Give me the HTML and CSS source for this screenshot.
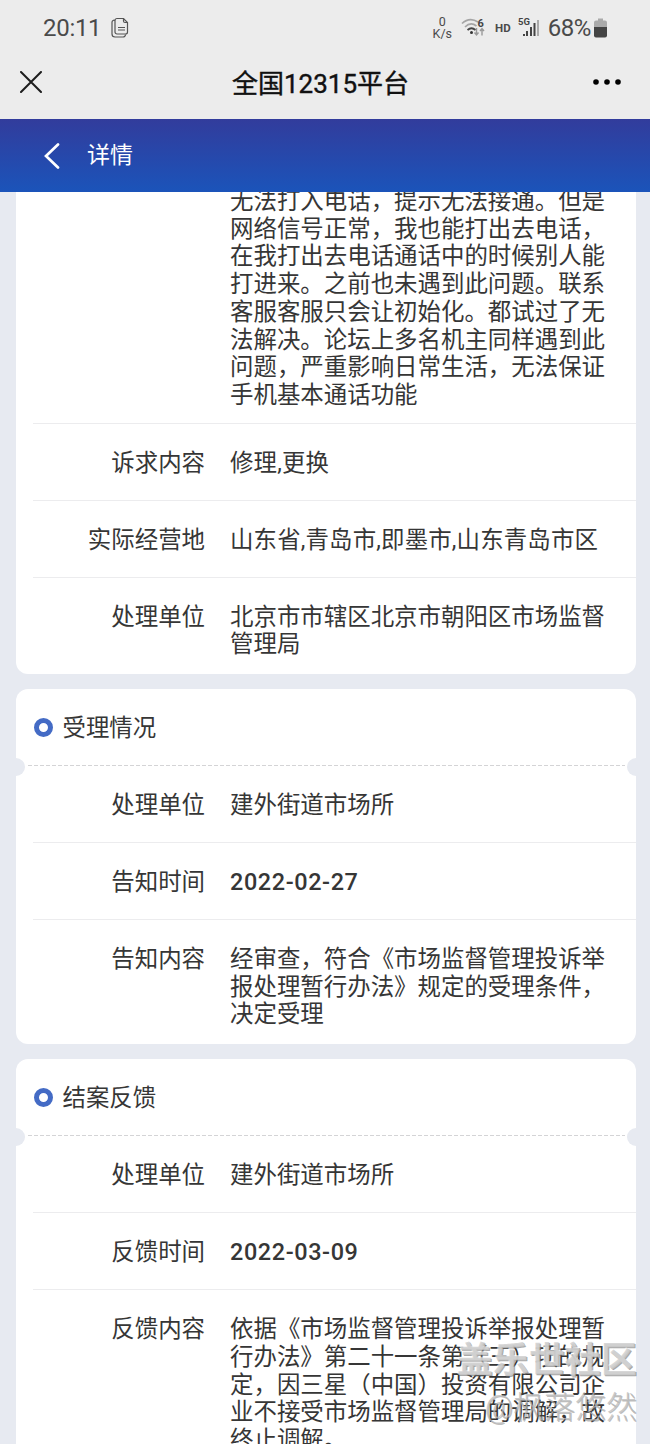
FILE: index.html
```html
<!DOCTYPE html>

<html lang="zh-CN">
    <head>
        <meta charset="utf-8">
        <title>全国12315平台</title>

        <link rel="stylesheet" href="styles.css">
    </head>

    <body>
        <div class="status-bar">
            <span class="time">20:11</span>
            <svg class="copy-icon" width="20" height="22" viewBox="0 0 20 22">
                <path d="M7 1.5h6.5l4 4v9.500a2 2 0 0 1-2 2H7a2 2 0 0 1-2-2v-11.500a2 2 0 0 1 2-2z"/>
                <path d="M13.500 1.500v2.500a1.500 1.500 0 0 0 1.500 1.500h2.500M8 10.500h7M8 13h7M5 3.500a2 2 0 0 0-3 1.500v12a3 3 0 0 0 3 3h8a2.500 2.500 0 0 0 2.500-2.500"/>
            </svg>
            <div class="status-right">
                <div class="speed"><span>0</span><span>K/s</span></div>
                <svg class="wifi" width="24" height="20" viewBox="0 0 24 20">
                    <g fill="none" stroke-width="1.700">
                        <path stroke="#a5a5a5" d="M1 5.500Q8.500-1.500 17 4M4 9Q9.500 3.500 15.500 8"/>
                        <path stroke="#444" d="M6.500 12Q10.500 8.500 14.500 12"/>
                        <path stroke="#999" stroke-width="1.400" d="M15.500 10v7M13.500 14.500l2 2.500 2-2.500M21 17.500v-7M19 13l2-2.500 2 2.500"/>
                    </g>
                    <circle cx="10.500" cy="14.500" r="1.500" fill="#333"/>
                    <text x="16.500" y="9">6</text>
                </svg>
                <span class="hd">HD</span>
                <svg class="signal" width="23" height="21" viewBox="0 0 23 21">
                    <text x="0" y="8">5G</text>
                    <g fill="#444">
                        <rect x="5" y="17" width="2" height="2"/>
                        <rect x="8" y="14" width="2" height="5"/>
                        <rect x="12" y="10" width="2" height="9"/>
                        <rect x="15.500" y="6" width="2" height="13"/>
                        <rect x="19" y="3" width="2" height="16" fill="#aaa"/>
                    </g>
                </svg>
                <span class="percent">68%</span>
                <svg class="battery" width="13" height="20" viewBox="0 0 13 20">
                    <path fill="#aaa" d="M4 0.500h5v2h2a2 2 0 0 1 2 2v5H0v-5a2 2 0 0 1 2-2h2z"/>
                    <path fill="#444" d="M0 9h13v8.500a2 2 0 0 1-2 2H2a2 2 0 0 1-2-2z"/>
                </svg>
            </div>
        </div>

        <div class="title-bar">
            <svg width="22" height="22" viewBox="0 0 22 22">
                <path d="M1 1l20 20M21 1L1 21" stroke="#1c1c1c" stroke-width="2" stroke-linecap="round"/>
            </svg>
            <h1>全国12315平台</h1>
            <svg width="28" height="6" viewBox="0 0 28 6">
                <circle cx="3" cy="3" r="2.800"/>
                <circle cx="14" cy="3" r="2.800"/>
                <circle cx="25" cy="3" r="2.800"/>
            </svg>
        </div>

        <div class="nav">
            <svg width="16" height="26" viewBox="0 0 16 26">
                <path d="M14 1.500L2 13l12 11.500" fill="none" stroke="#fff" stroke-width="2.700" stroke-linecap="round"/>
            </svg>
            <span>详情</span>
        </div>

        <div class="content">
            <div class="card first">
                <div class="row">
                    <div class="label"></div>
                    <div class="value">无法打入电话，提示无法接通。但是<br>网络信号正常，我也能打出去电话，<br>在我打出去电话通话中的时候别人能<br>打进来。之前也未遇到此问题。联系<br>客服客服只会让初始化。都试过了无<br>法解决。论坛上多名机主同样遇到此<br>问题，严重影响日常生活，无法保证<br>手机基本通话功能</div>
                </div>
                <div class="row">
                    <div class="label">诉求内容</div>
                    <div class="value list">修理,更换</div>
                </div>
                <div class="row">
                    <div class="label">实际经营地</div>
                    <div class="value list">山东省,青岛市,即墨市,山东青岛市区</div>
                </div>
                <div class="row">
                    <div class="label">处理单位</div>
                    <div class="value">北京市市辖区北京市朝阳区市场监督<br>管理局</div>
                </div>
            </div>

            <div class="card">
                <div class="card-title"><i class="ring"></i>受理情况</div>
                <div class="row">
                    <div class="label">处理单位</div>
                    <div class="value">建外街道市场所</div>
                </div>
                <div class="row">
                    <div class="label">告知时间</div>
                    <div class="value date">2022-02-27</div>
                </div>
                <div class="row">
                    <div class="label">告知内容</div>
                    <div class="value">经审查，符合《市场监督管理投诉举<br>报处理暂行办法》规定的受理条件，<br>决定受理</div>
                </div>
            </div>

            <div class="card">
                <div class="card-title"><i class="ring"></i>结案反馈</div>
                <div class="row">
                    <div class="label">处理单位</div>
                    <div class="value">建外街道市场所</div>
                </div>
                <div class="row">
                    <div class="label">反馈时间</div>
                    <div class="value date">2022-03-09</div>
                </div>
                <div class="row">
                    <div class="label">反馈内容</div>
                    <div class="value">依据《市场监督管理投诉举报处理暂<br>行办法》第二十一条第（三）项的规<br>定，因三星（中国）投资有限公司企<br>业不接受市场监督管理局的调解，故<br>终止调解。</div>
                </div>
            </div>
        </div>

        <div class="watermark">
            <div class="site">盖乐世社区</div>
            <div class="user">@枫落悠然</div>
        </div>
    </body>
</html>
```
FILE: styles.css
```css
* {
    box-sizing: border-box;
}

body {
    position: relative;
    display: flex;
    flex-direction: column;
    margin: 0;
    width: 650px;
    height: 1444px;
    overflow: hidden;
    background-color: #e7eaf1;
    color: #363636;
    font-family: Roboto, "Noto Sans CJK SC", sans-serif;
}

svg {
    flex: none;
}

.status-bar {
    display: flex;
    align-items: center;
    height: 55px;
    flex: none;
    padding: 0 43px;
    background-color: #ececec;
    color: #4a4a4a;
}
.time {
    font-size: 24px;
    line-height: 28px;
    letter-spacing: -0.3px;
}
.copy-icon {
    margin-left: 9px;
    fill: none;
    stroke: #555;
    stroke-width: 1.2;
}
.status-right {
    display: flex;
    align-items: center;
    margin-left: auto;
}
.speed {
    display: flex;
    flex-direction: column;
    align-items: center;
    font-size: 12.5px;
    line-height: 12px;
    margin-right: 9px;
}
.wifi text {
    font-size: 11px;
    font-weight: bold;
    fill: #444;
}
.hd {
    font-size: 11.5px;
    font-weight: bold;
    margin: 0 7px 0 10px;
}
.signal text {
    font-size: 9.5px;
    font-weight: bold;
    fill: #444;
}
.percent {
    font-size: 24px;
    margin: 0 3px 0 7px;
    letter-spacing: -0.4px;
}

.title-bar {
    display: flex;
    align-items: center;
    justify-content: space-between;
    height: 64px;
    flex: none;
    padding: 0 29px 10px 20px;
    background-color: #ececec;
}
.title-bar h1 {
    margin: -2px 0 0 6px;
    font-size: 26px;
    font-weight: 400;
    color: #111;
    -webkit-text-stroke: 0.4px #111;
}

.nav {
    display: flex;
    align-items: center;
    gap: 27px;
    height: 73px;
    flex: none;
    padding-left: 44px;
    background: linear-gradient(#323c9c, #1b54ba);
    color: #fff;
    font-size: 23px;
}
.nav span {
    margin-top: -5px;
}

.content {
    flex: 1;
    min-height: 0;
    overflow: hidden;
    padding: 0 14px 0 15.5px;
}

.card {
    margin-bottom: 15.5px;
    padding-left: 17.5px;
    border-radius: 12px;
    background-color: #fff;
    overflow: hidden;
}
.card.first {
    margin-top: -30px;
}

.row {
    display: flex;
    gap: 25px;
    min-height: 77px;
    padding: 26px 0 13px;
    font-size: 23.45px;
    line-height: 27.7px;
    border-bottom: 1px solid #ececee;
}
.row:last-child {
    border-bottom: none;
    padding-bottom: 14.5px;
}
.label {
    width: 172px;
    text-align: right;
    flex: none;
}
.value {
    white-space: nowrap;
}
.list {
    letter-spacing: 0.15px;
}
.date {
    font-weight: 500;
    letter-spacing: 0.6px;
}

.card-title {
    position: relative;
    display: flex;
    align-items: center;
    gap: 10px;
    height: 77px;
    margin-left: -17.5px;
    padding-left: 18px;
    font-size: 23.4px;
    line-height: 32px;
    background: repeating-linear-gradient(90deg, #d4d4d6 0 4px, transparent 4px 6px) 12px 100% / 597px 1px no-repeat;
}
/* notches at both ends of the dashed line */
.card-title::before,
.card-title::after {
    content: "";
    position: absolute;
    bottom: -10px;
    width: 18px;
    height: 18px;
    border-radius: 50%;
    background-color: #e7eaf1;
}
.card-title::before {
    left: -9px;
}
.card-title::after {
    right: -9px;
}
.ring {
    width: 19px;
    height: 19px;
    border: 5px solid #446bc5;
    border-radius: 50%;
}

.watermark {
    position: absolute;
    right: 13px;
    bottom: 13px;
    display: flex;
    flex-direction: column;
    align-items: flex-end;
    white-space: nowrap;
}
.site {
    font-size: 36px;
    line-height: 48px;
    font-weight: bold;
    color: rgba(205, 205, 205, 0.8);
    text-shadow: -1px -1px 0 rgba(255, 255, 255, 0.6), 1px 1px 0 rgba(110, 110, 110, 0.6);
}
.user {
    font-size: 31px;
    line-height: 46px;
    font-weight: 300;
    color: rgba(185, 185, 185, 0.75);
    text-shadow: 1px 1px 0 rgba(110, 110, 110, 0.45);
}
```
